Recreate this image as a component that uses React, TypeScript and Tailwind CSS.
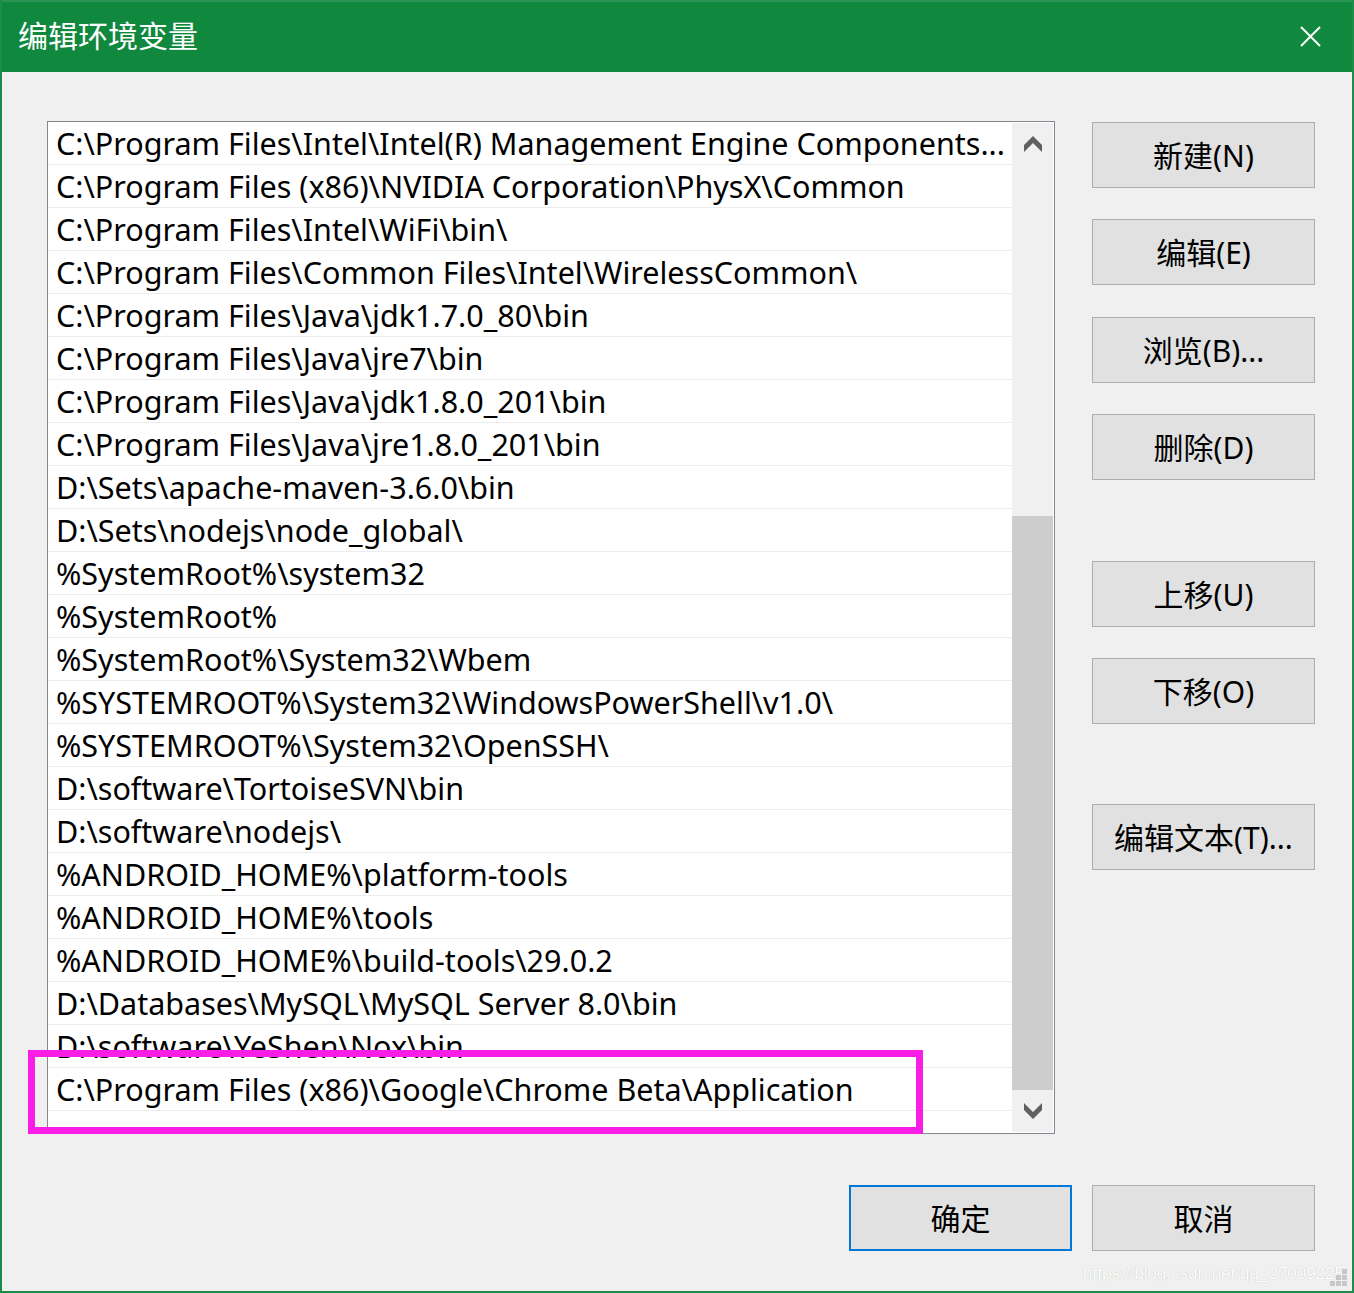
import React from 'react';

const paths = [
  'C:\\Program Files\\Intel\\Intel(R) Management Engine Components...',
  'C:\\Program Files (x86)\\NVIDIA Corporation\\PhysX\\Common',
  'C:\\Program Files\\Intel\\WiFi\\bin\\',
  'C:\\Program Files\\Common Files\\Intel\\WirelessCommon\\',
  'C:\\Program Files\\Java\\jdk1.7.0_80\\bin',
  'C:\\Program Files\\Java\\jre7\\bin',
  'C:\\Program Files\\Java\\jdk1.8.0_201\\bin',
  'C:\\Program Files\\Java\\jre1.8.0_201\\bin',
  'D:\\Sets\\apache-maven-3.6.0\\bin',
  'D:\\Sets\\nodejs\\node_global\\',
  '%SystemRoot%\\system32',
  '%SystemRoot%',
  '%SystemRoot%\\System32\\Wbem',
  '%SYSTEMROOT%\\System32\\WindowsPowerShell\\v1.0\\',
  '%SYSTEMROOT%\\System32\\OpenSSH\\',
  'D:\\software\\TortoiseSVN\\bin',
  'D:\\software\\nodejs\\',
  '%ANDROID_HOME%\\platform-tools',
  '%ANDROID_HOME%\\tools',
  '%ANDROID_HOME%\\build-tools\\29.0.2',
  'D:\\Databases\\MySQL\\MySQL Server 8.0\\bin',
  'D:\\software\\YeShen\\Nox\\bin',
  'C:\\Program Files (x86)\\Google\\Chrome Beta\\Application',
];

const font = { fontFamily: '"Noto Sans", "Noto Sans CJK SC", sans-serif' };

function Chevron({ up }: { up?: boolean }) {
  return (
    <svg width="18" height="16" viewBox="0 0 18 16" className={up ? '' : 'rotate-180'}>
      <polygon points="9,0 18,9 18,16 9,7 0,16 0,9" fill="#606060" />
    </svg>
  );
}

function Btn({ label, className = '', primary }: { label: string; className?: string; primary?: boolean }) {
  return (
    <button
      className={`w-[223px] h-[66px] bg-[#e1e1e1] text-[30px] text-black flex items-center justify-center ${
        primary ? 'border-2 border-[#0078d7]' : 'border border-[#adadad]'
      } ${className}`}
    >
      {label}
    </button>
  );
}

export default function App() {
  return (
    <div
      className="relative w-[1354px] h-[1293px] bg-[#f0f0f0] border-2 border-t-0 border-[#1d8b49] flex flex-col overflow-hidden"
      style={font}
    >
      {/* Title bar */}
      <div className="h-[72px] bg-[#10893e] border-t-2 border-[#2a9455] -mx-[2px] pl-[18px] pr-[33px] flex items-center justify-between shrink-0">
        <span className="text-white text-[30px] leading-none -mt-[2px]">编辑环境变量</span>
        <svg width="21" height="21" viewBox="0 0 21 21" className="-mt-[2px]">
          <path d="M1 1 L20 20 M20 1 L1 20" stroke="#fff" strokeWidth="2" />
        </svg>
      </div>

      {/* Body */}
      <div className="flex pl-[45px] pt-[49px]">
        {/* List */}
        <div className="w-[1008px] h-[1013px] bg-white border border-[#828790] flex overflow-hidden">
          <div className="flex-1 flex flex-col">
            {paths.map((p) => (
              <div key={p} className="h-[43px] shrink-0 border-b border-[#ececec] pl-[8px] pt-[2px] flex items-center text-[30.5px] text-black whitespace-nowrap">
                {p}
              </div>
            ))}
            <div className="h-[43px] shrink-0" />
          </div>
          <div className="w-[41px] bg-[#f0f0f0] flex flex-col items-center mr-[1px] my-[1px]">
            <div className="h-[42px] flex items-center justify-center w-full">
              <Chevron up />
            </div>
            <div className="h-[351px]" />
            <div className="w-full h-[574px] bg-[#cdcdcd]" />
            <div className="flex-1 flex items-center justify-center w-full">
              <Chevron />
            </div>
          </div>
        </div>

        {/* Side buttons */}
        <div className="ml-[37px] flex flex-col pt-[1px]">
          <Btn label="新建(N)" />
          <Btn label="编辑(E)" className="mt-[31px]" />
          <Btn label="浏览(B)..." className="mt-[32px]" />
          <Btn label="删除(D)" className="mt-[31px]" />
          <Btn label="上移(U)" className="mt-[81px]" />
          <Btn label="下移(O)" className="mt-[31px]" />
          <Btn label="编辑文本(T)..." className="mt-[80px]" />
        </div>
      </div>

      {/* Bottom buttons */}
      <div className="flex justify-end gap-[20px] pr-[37px] mt-[51px]">
        <Btn label="确定" primary />
        <Btn label="取消" />
      </div>

      {/* Highlight box */}
      <div className="absolute left-[26px] top-[1050px] w-[895px] h-[84px] border-[7px] border-[#f81ee6] pointer-events-none" />

      {/* Watermark */}
      <div className="absolute right-[4px] bottom-[4px] flex items-end">
        <span
          className="text-[17px] leading-none mb-[5px] text-white [text-shadow:0_0_1px_#b0b0b0]"
          style={{ fontFamily: '"Liberation Sans", Arial, sans-serif' }}
        >
          https://blog.csdn.net/qq_27009225
        </span>
        <svg width="18" height="18" viewBox="0 0 18 18" className="-ml-[14px]">
          <g fill="#c8c8c8">
            <rect x="12" y="0" width="5" height="5" />
            <rect x="6" y="6" width="5" height="5" />
            <rect x="12" y="6" width="5" height="5" />
            <rect x="0" y="12" width="5" height="5" />
            <rect x="6" y="12" width="5" height="5" />
            <rect x="12" y="12" width="5" height="5" />
          </g>
        </svg>
      </div>
    </div>
  );
}
